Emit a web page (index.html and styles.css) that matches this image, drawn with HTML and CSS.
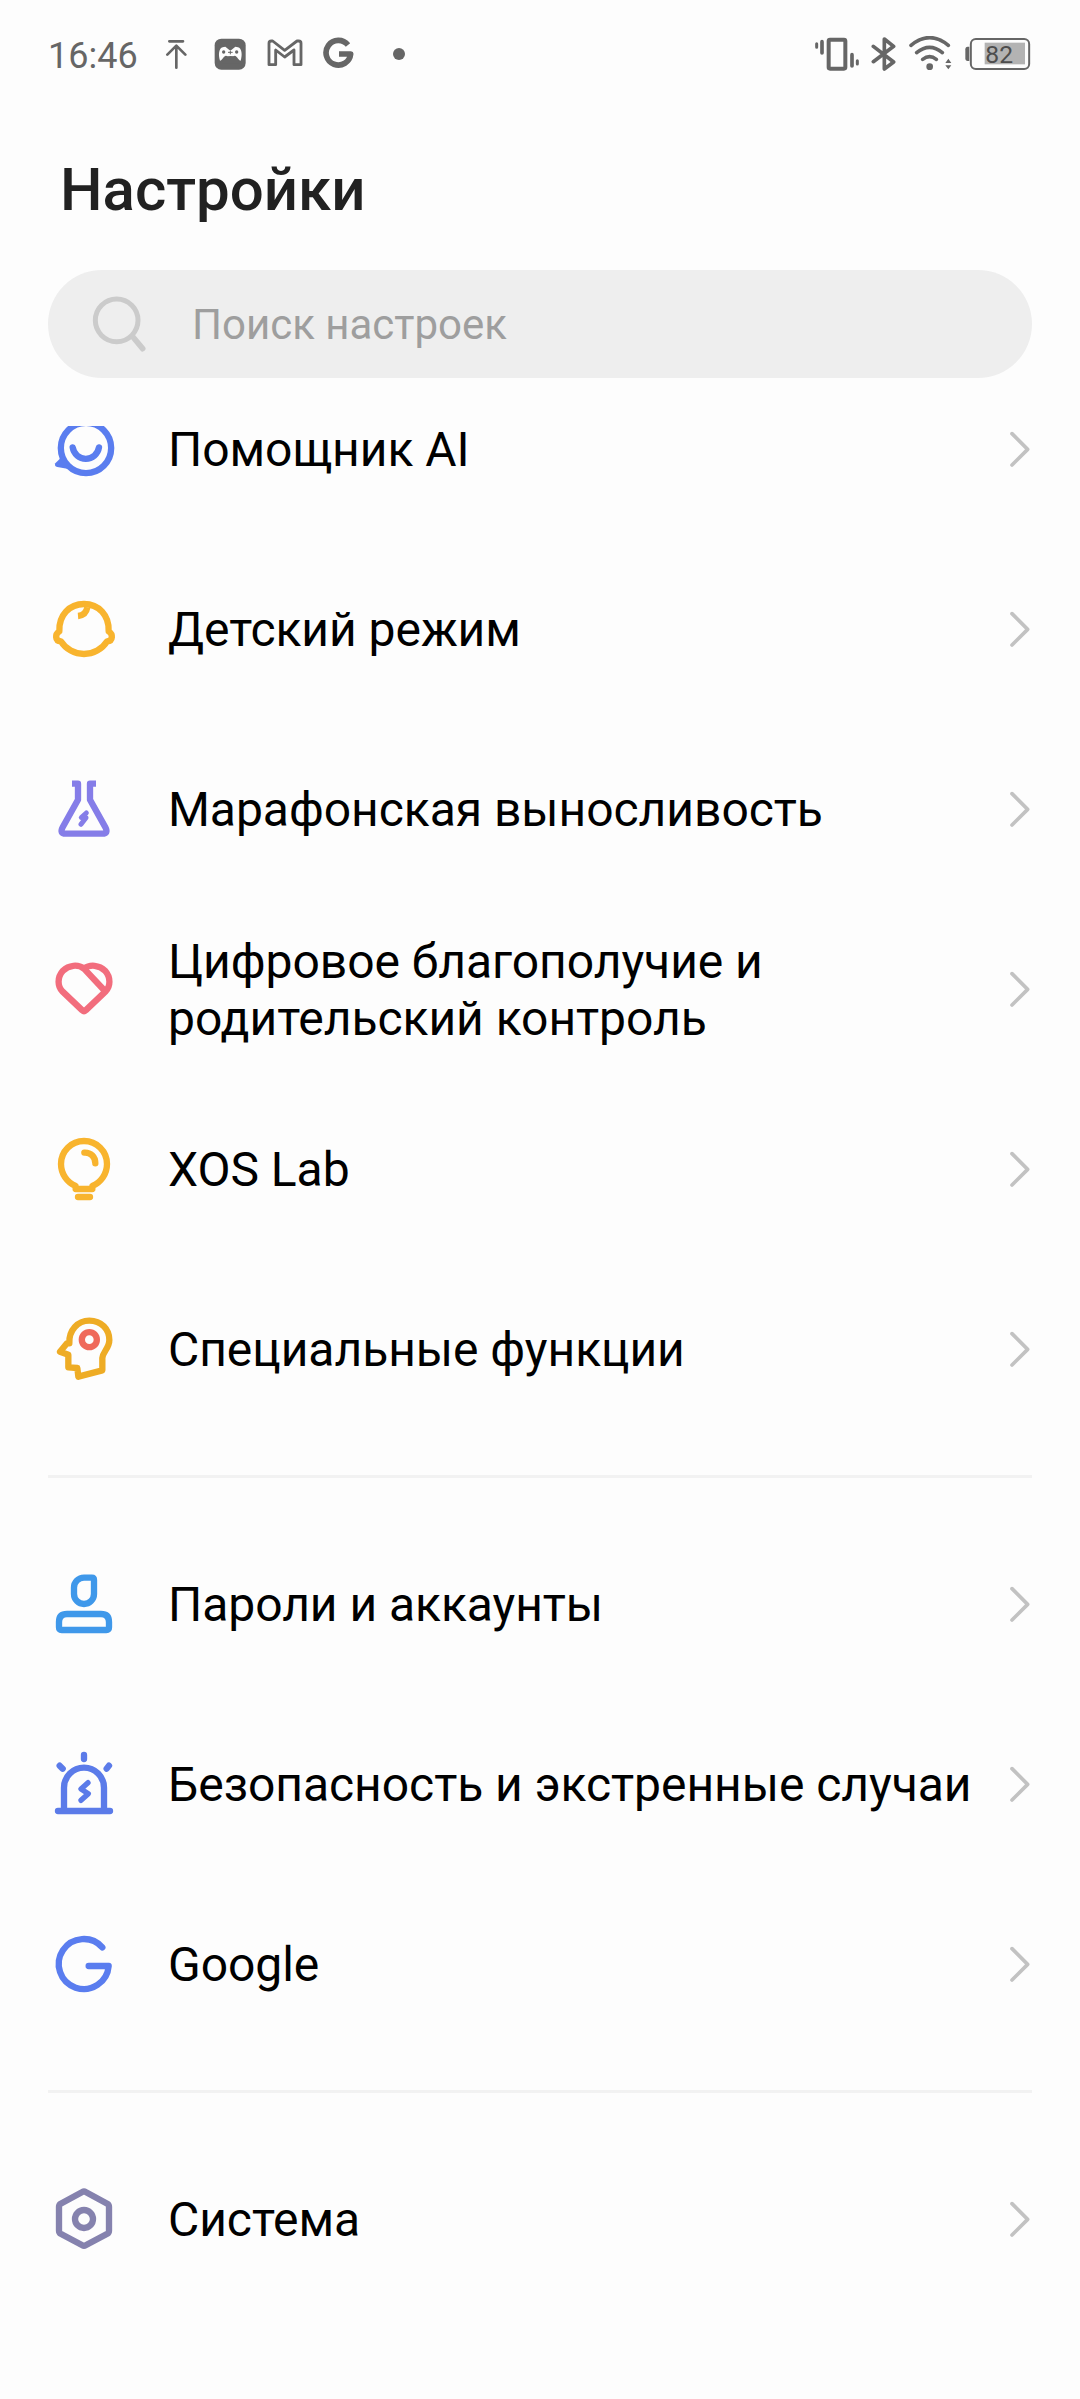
FILE: index.html
```html
<!DOCTYPE html>
<html lang="ru">
<head>
<meta charset="utf-8">
<title>Настройки</title>
<link rel="stylesheet" href="styles.css">
</head>
<body>
<svg class="defs" width="0" height="0" aria-hidden="true">
  <symbol id="chevron" viewBox="0 0 66 108"><path d="M6 8 53 55 6 102" fill="none" stroke="#c2c2c2" stroke-width="11" stroke-linecap="round" stroke-linejoin="round"/></symbol>
</svg>

<header class="status">
  <span class="clock">16:46</span>
  <div class="notifications">
    <svg class="upload line" width="22" height="36" viewBox="405 48 66 108"><path d="M418 64H459M439 143V78M412 104 439 77 466 104" stroke-width="8"/></svg>
    <svg width="33" height="36" viewBox="552 48 99 108"><rect x="554" y="56" width="93" height="93" rx="20" fill="#666"/><path d="M570 122C564 104 567 84 578 82L586 80 598 90H604L616 80 624 82C635 84 638 104 632 122C626 122 622 108 614 107L602 112 588 107C580 108 576 122 570 122Z" fill="#fdfdfd"/><circle cx="581" cy="96" r="5" fill="#666"/><circle cx="620" cy="96" r="5" fill="#666"/><path d="M601 91V103M594 97H608" stroke="#666" stroke-width="3"/><path d="M576 124Q602 92 628 124V130H576Z" fill="#666"/></svg>
    <svg width="36" height="36" viewBox="708 48 108 108" class="line"><path d="M714 70Q714 63 721 63H725L761 91 798 63H803Q810 63 810 70V134H789V90L761 111 734 90V134H714Z" stroke-width="8.5"/></svg>
    <svg width="32" height="36" viewBox="876 48 96 108" class="line"><path d="M951 75A37 37 0 1 0 959 102H924" stroke-width="17" stroke-linecap="butt"/></svg>
    <svg class="more" width="14" height="36" viewBox="1083 48 42 108"><circle cx="1104" cy="102" r="18" fill="#666"/></svg>
  </div>
  <div class="system">
    <svg width="46" height="36" viewBox="72 48 138 108" class="line"><rect x="116" y="59" width="50" height="87" rx="4" stroke-width="12"/><path d="M96 65V99M186 104V138" stroke-width="11"/><path d="M80 71V82M202 122V132" stroke-width="9"/></svg>
    <svg class="bluetooth" width="25" height="36" viewBox="243 48 75 108"><path d="M250 79 311 126 283 147V57L311 79 250 125" stroke-width="11"/></svg>
    <svg class="line wifi" width="44" height="36" viewBox="354 48 132 108"><path d="M363 76Q419 30 475 76M380 98Q419 66 457 98M398 118Q419 102 439 118" stroke-width="11"/><circle cx="419" cy="140" r="10" fill="#666" stroke="none"/><path d="M466 129 475 116 484 129ZM466 136 475 148 484 136Z" fill="#666" stroke="none"/></svg>
    <svg class="battery" width="67" height="36" viewBox="522 48 201 108"><path d="M538 80H533Q526 80 526 88V115Q526 123 533 123H538Z" fill="#666"/><rect x="542.5" y="57" width="175" height="90" rx="15" fill="none" stroke="#666" stroke-width="6"/><rect x="584" y="68" width="121" height="65" fill="#b3b3b3"/><text x="586" y="128">82</text></svg>
  </div>
</header>

<h1>Настройки</h1>

<div class="search">
  <svg width="54" height="56" viewBox="187 496 162 168"><circle cx="261" cy="569" r="64" fill="none" stroke="#cbcbcb" stroke-width="15"/><path d="M310 619 339 654" stroke="#cbcbcb" stroke-width="17" stroke-linecap="round"/></svg>
  <span>Поиск настроек</span>
</div>

<main class="list">
  <section class="group">
    <a class="row">
      <svg class="icon blue" viewBox="24 9 216 216"><circle cx="138" cy="114" r="75.5"/><path d="M98 112A40 41 0 0 0 177 112"/><path d="M68 138 46 160Q42 169 52 171L90 178Z" class="solid"/></svg>
      <span class="label">Помощник AI</span><svg class="chevron"><use href="#chevron"/></svg>
    </a>
    <a class="row">
      <svg class="icon yellow" viewBox="24 39 216 216"><path d="M58 154C56 106 88 72 132 72S208 106 206 154C219 162 220 183 201 184C187 207 160 222 132 222S77 207 63 184C44 183 45 162 58 154Z"/><path d="M142 82Q138 106 114 108" stroke-linecap="butt"/></svg>
      <span class="label">Детский режим</span><svg class="chevron"><use href="#chevron"/></svg>
    </a>
    <a class="row">
      <svg class="icon violet" viewBox="24 579 216 216"><path d="M96 611H114V659L68 742Q58 761 77 761H187Q206 761 196 742L150 659V611H168" stroke-linecap="butt"/><path d="M139 699 124 713H138L123 733" stroke-width="15"/></svg>
      <span class="label">Марафонская выносливость</span><svg class="chevron"><use href="#chevron"/></svg>
    </a>
    <a class="row">
      <svg class="icon red" viewBox="24 39 216 216"><path d="M132 86C114 72 86 75 69 92C51 112 52 139 68 155L127 211Q132 216 137 211L196 155C212 139 213 112 195 92C178 75 150 72 132 86L192 150"/></svg>
      <span class="label">Цифровое благополучие и родительский контроль</span><svg class="chevron"><use href="#chevron"/></svg>
    </a>
    <a class="row">
      <svg class="icon yellow" viewBox="24 579 216 216"><path d="M107 747V738C82 728 63 702 63 672A69 69 0 0 1 201 672C201 702 182 728 157 738V747Z"/><path d="M133 638C152 637 166 650 166 670M114 771H150"/></svg>
      <span class="label">XOS Lab</span><svg class="chevron"><use href="#chevron"/></svg>
    </a>
    <a class="row">
      <svg class="icon gold" viewBox="24 39 216 216"><path d="M88 130C86 91 113 62 148 62C184 62 208 88 208 120C208 145 189 154 187 174V211L115 230 112 204 85 202V164L60 155 81 130Z"/><circle cx="148" cy="119" r="22.500" stroke="#ef6a5b"/></svg>
      <span class="label">Специальные функции</span><svg class="chevron"><use href="#chevron"/></svg>
    </a>
  </section>
  <section class="group">
    <a class="row">
      <svg class="icon sky" viewBox="24 24 216 216"><path d="M132 53H156Q162 53 162 60V102A30 30 0 0 1 102 102V83A30 30 0 0 1 132 53Z"/><path d="M81 162H183Q207 162 207 186V202Q207 210 199 210H65Q57 210 57 202V186Q57 162 81 162Z"/></svg>
      <span class="label">Пароли и аккаунты</span><svg class="chevron"><use href="#chevron"/></svg>
    </a>
    <a class="row">
      <svg class="icon indigo" viewBox="24 564 216 216"><path d="M54 753H210M72 753V683A60 60 0 0 1 192 683V753M132 585V597M59 617 68 626M207 617 200 626"/><path d="M144 668 123 687 145 701 123 721" stroke-width="16"/></svg>
      <span class="label">Безопасность и экстренные случаи</span><svg class="chevron"><use href="#chevron"/></svg>
    </a>
    <a class="row">
      <svg class="icon blue" viewBox="24 24 216 216"><path d="M187 82A75 75 0 1 0 206 138H146"/></svg>
      <span class="label">Google</span><svg class="chevron"><use href="#chevron"/></svg>
    </a>
  </section>
  <section class="group">
    <a class="row">
      <svg class="icon slate" viewBox="24 9 216 216"><path d="M127 36Q132 33 137 36L202 71Q207 74 207 80V152Q207 158 202 161L137 196Q132 199 127 196L62 161Q57 158 57 152V80Q57 74 62 71Z"/><circle cx="132" cy="117" r="27"/></svg>
      <span class="label">Система</span><svg class="chevron"><use href="#chevron"/></svg>
    </a>
  </section>
</main>
</body>
</html>
```
FILE: styles.css
```css
* { box-sizing: border-box; }
body {
  margin: 0;
  height: 2399px;
  display: flex;
  flex-direction: column;
  overflow: hidden;
  background: #fdfdfd;
  color: #000;
  font-family: Roboto, sans-serif;
}
svg { display: block; flex: none; }
.defs { display: none; }

.status {
  height: 108px;
  padding: 0 49px 0 48px;
  display: flex;
  align-items: center;
  color: #666;
}
.clock { width: 117px; font-size: 36px; line-height: 42px; padding-top: 3px; }
.notifications { display: flex; gap: 20px; }
.upload { margin-right: 7px; }
.more { margin-left: 17px; }
.system { display: flex; margin-left: auto; }
.bluetooth { margin-left: 11px; }
.wifi, .battery { margin-left: 12px; }
.line, .bluetooth {
  fill: none;
  stroke: #666;
  stroke-linecap: round;
  stroke-linejoin: round;
}
.battery text { font-size: 74px; fill: #4d4d4d; }

h1 {
  margin: 0;
  height: 162px;
  padding: 47px 60px 0;
  font-size: 60px;
  line-height: 70px;
  font-weight: 500;
  color: #212121;
}

.search {
  height: 108px;
  margin: 0 48px;
  padding-left: 44px;
  display: flex;
  align-items: center;
  gap: 46px;
  border-radius: 54px;
  background: #eee;
  color: #9e9e9e;
  font-size: 42px;
}

.list {
  flex: 1;
  margin-top: 48px;
  padding: 0 48px;
  overflow: hidden;
}
.group:first-child { margin-top: -67px; }
.group + .group {
  margin-top: 36px;
  padding-top: 36px;
  border-top: 3px solid #f2f2f2;
}
.row {
  height: 180px;
  display: flex;
  align-items: center;
}
.icon {
  width: 72px;
  height: 72px;
  margin-right: 48px;
  fill: none;
  stroke: currentColor;
  stroke-width: 19;
  stroke-linecap: round;
  stroke-linejoin: round;
}
.icon .solid { fill: currentColor; stroke: none; }
.label {
  flex: 1;
  padding-top: 1px;
  font-size: 48px;
  line-height: 57px;
  letter-spacing: -0.04px;
}
.chevron { width: 22px; height: 36px; }

.blue { color: #5a7def; }
.yellow { color: #f8b42e; }
.gold { color: #eeac25; }
.violet { color: #857de8; }
.red { color: #f26d7d; }
.sky { color: #3f98ea; }
.indigo { color: #5b7be9; }
.slate { color: #8582ae; }
```
